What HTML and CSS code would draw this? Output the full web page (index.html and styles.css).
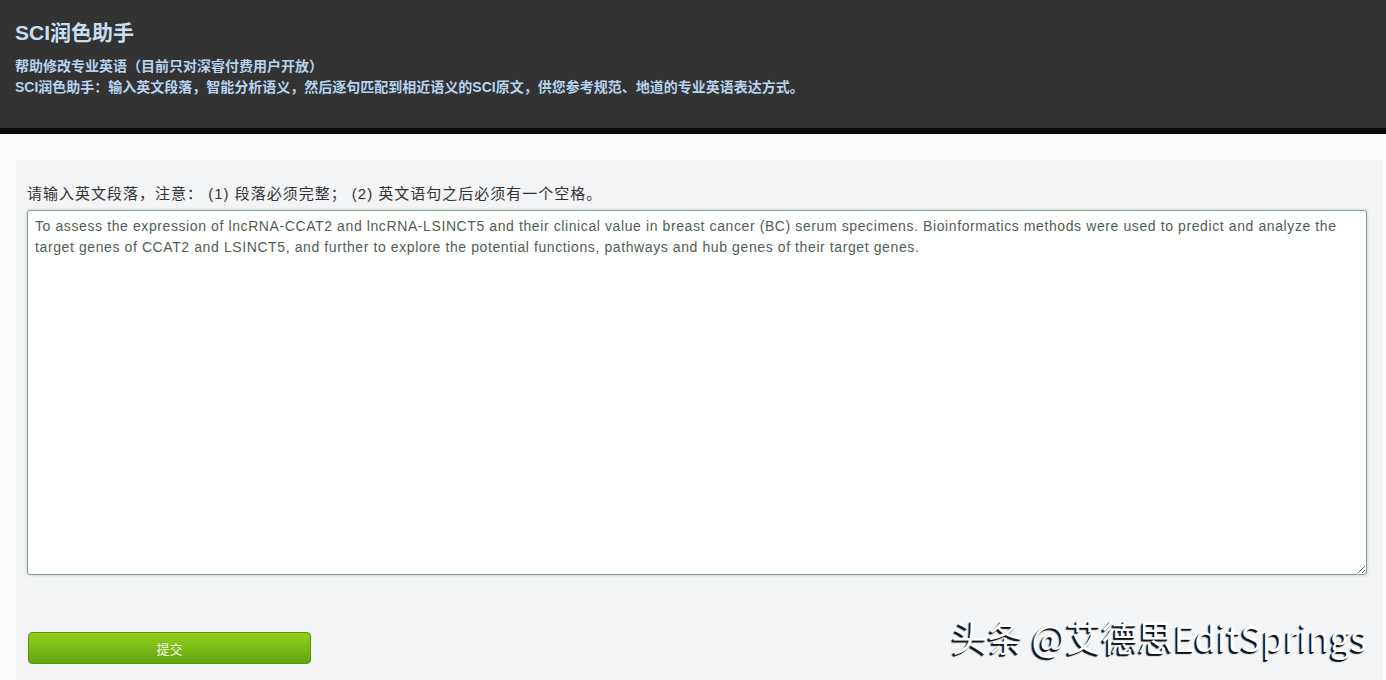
FILE: index.html
```html
<!DOCTYPE html>
<html lang="zh-CN">
<head>
    <meta charset="UTF-8">
    <title>SCI润色助手</title>
    <link rel="stylesheet" href="styles.css">
</head>
<body>
    <div class="header">
        <h1>SCI润色助手</h1>
        <p>帮助修改专业英语（目前只对深睿付费用户开放）</p>
        <p>SCI润色助手：输入英文段落，智能分析语义，然后逐句匹配到相近语义的SCI原文，供您参考规范、地道的专业英语表达方式。</p>
    </div>

    <div class="main">
        <form class="panel">
            <label for="para">请输入英文段落，注意： (1) 段落必须完整； (2) 英文语句之后必须有一个空格。</label>
            <textarea id="para">To assess the expression of lncRNA-CCAT2 and lncRNA-LSINCT5 and their clinical value in breast cancer (BC) serum specimens. Bioinformatics methods were used to predict and analyze the target genes of CCAT2 and LSINCT5, and further to explore the potential functions, pathways and hub genes of their target genes.</textarea>
            <div class="actions">
                <button type="button">提交</button>
                <span class="mark">头条 @艾德思EditSprings</span>
            </div>
        </form>
    </div>
</body>
</html>
```

FILE: styles.css
```css
body {
    margin: 0;
    font-family: "Liberation Sans", "Noto Sans CJK SC", sans-serif;
    background: #fafbfc;
    overflow: hidden;
}
.header {
    background: #333333;
    height: 134px;
    padding: 16px 15px 0;
    box-sizing: border-box;
    border-bottom: 6px solid #0a0a0c;
}
.header h1 {
    margin: 0 0 10px;
    font-size: 21px;
    font-weight: bold;
    color: #c6def2;
}
.header p {
    margin: 0;
    font-size: 14px;
    line-height: 21px;
    font-weight: bold;
    color: #b7d3ee;
}
.main {
    padding: 26px 3px 0 16px;
}
.panel {
    background: #f3f4f6;
    padding: 22px 16px 16px 11px;
    height: 540px;
    box-sizing: border-box;
}
label {
    display: block;
    font-size: 15px;
    letter-spacing: 1px;
    color: #333;
    margin-bottom: 7px;
}
textarea {
    display: block;
    width: 1340px;
    height: 365px;
    box-sizing: border-box;
    padding: 5px 24px 5px 7px;
    border: 1px solid #86a08a;
    border-radius: 3px;
    box-shadow: 0 0 3px rgba(110, 160, 110, 0.5);
    font-family: "Liberation Sans", sans-serif;
    font-size: 14px;
    letter-spacing: 0.6px;
    line-height: 21px;
    color: #4f5e52;
    background: #fff;
    resize: both;
}
.actions {
    display: flex;
    align-items: center;
    justify-content: space-between;
    margin-top: 57px;
    padding-left: 1px;
    width: 1340px;
}
button {
    width: 283px;
    height: 32px;
    border: 1px solid #5d9312;
    border-radius: 4px;
    background: linear-gradient(#92d21c, #64a312);
    color: #f3f8e8;
    font-size: 13px;
    font-family: "Noto Sans CJK SC", sans-serif;
    cursor: pointer;
}
.mark {
    font-family: "Noto Sans CJK SC", sans-serif;
    font-size: 36px;
    color: #fff;
    text-shadow: -2px 2px 1px #111, -1px 1px 0 #222;
    margin-right: 1px;
    margin-top: -24px;
}
```
